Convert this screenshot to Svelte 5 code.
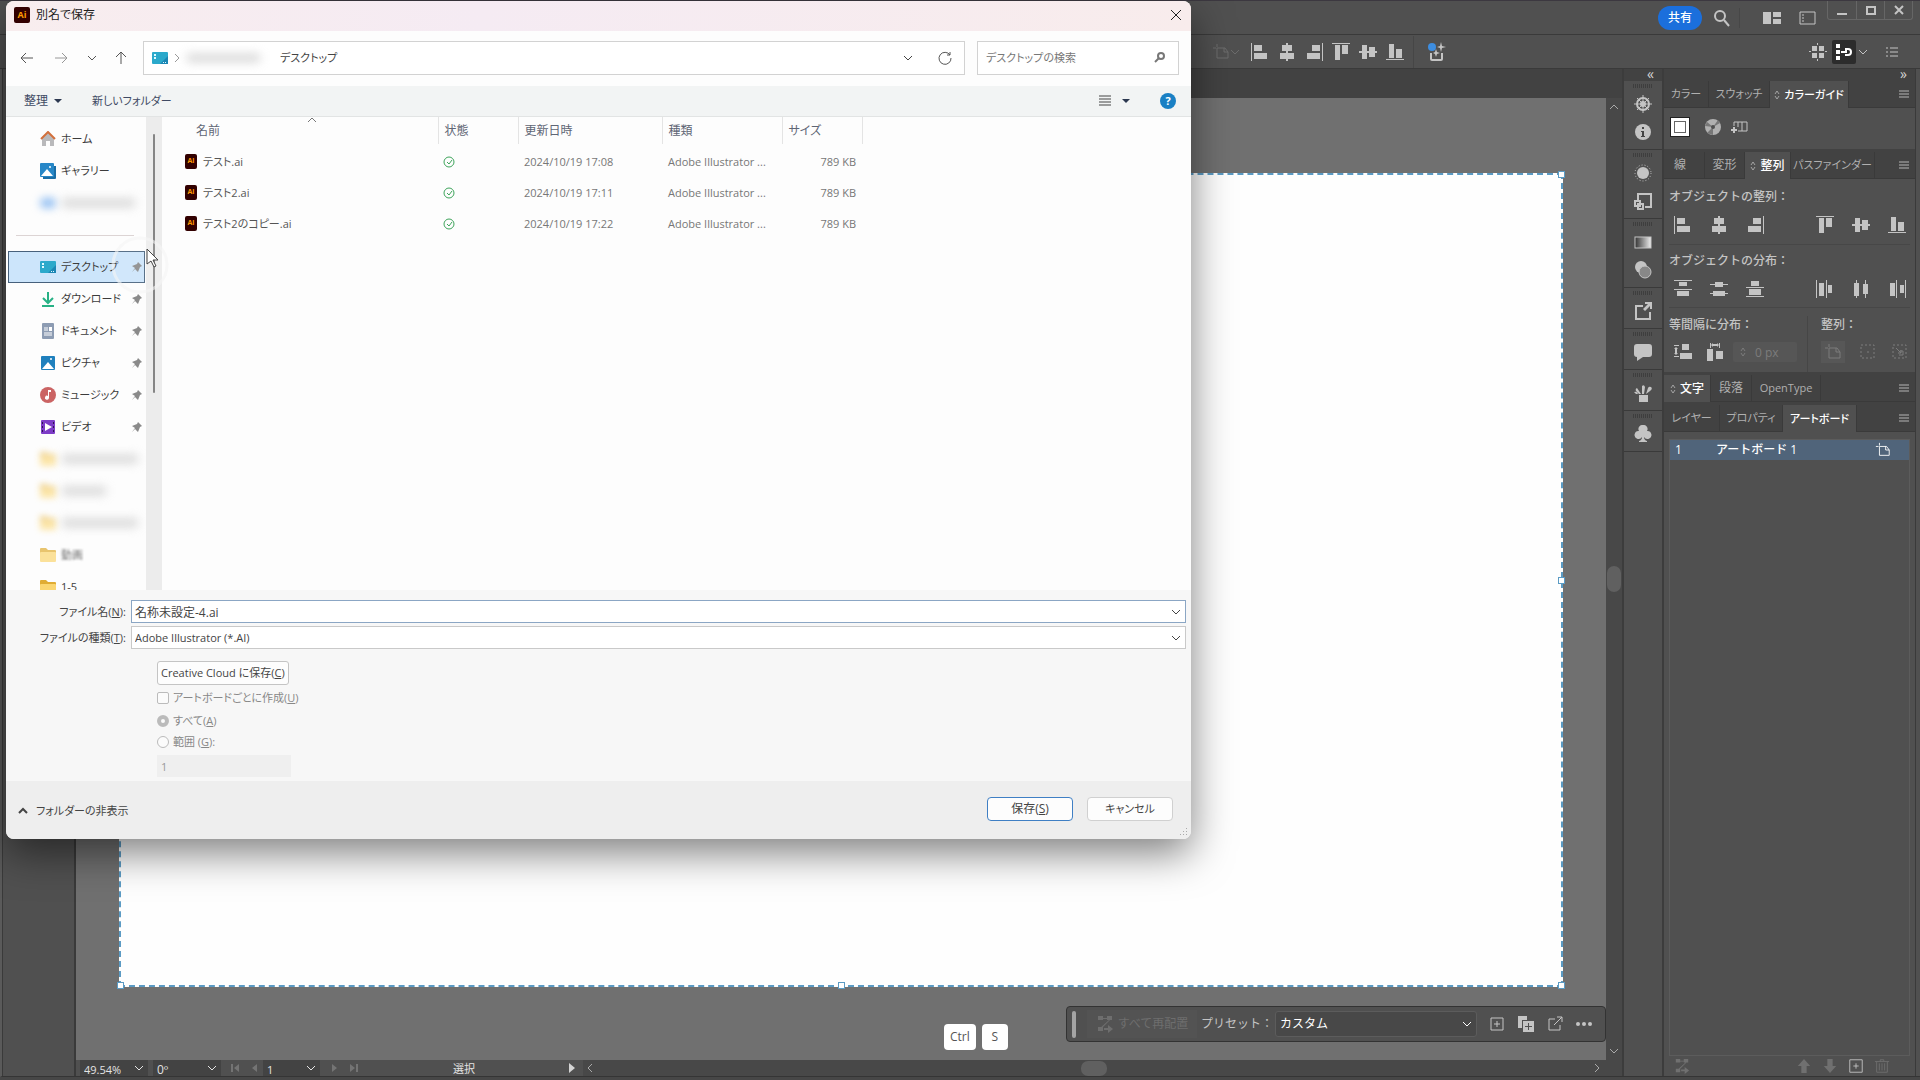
<script lang="ts">
  const files = [
    { name: 'テスト.ai', date: '2024/10/19 17:08' },
    { name: 'テスト2.ai', date: '2024/10/19 17:11' },
    { name: 'テスト2のコピー.ai', date: '2024/10/19 17:22' },
  ];

  const quickAccess = [
    { icon: 'desktop', label: 'デスクトップ', pinned: true, selected: true },
    { icon: 'download', label: 'ダウンロード', pinned: true },
    { icon: 'document', label: 'ドキュメント', pinned: true },
    { icon: 'picture', label: 'ピクチャ', pinned: true },
    { icon: 'music', label: 'ミュージック', pinned: true },
    { icon: 'video', label: 'ビデオ', pinned: true },
    { icon: 'folder', label: '', mask: 78 },
    { icon: 'folder', label: '', mask: 46 },
    { icon: 'folder', label: '', mask: 78 },
    { icon: 'folder', label: '動画', soft: true },
    { icon: 'folder', label: '1-5' },
  ];

  // 18x18 glyphs
  const glyphs: Record<string, string> = {
    left: 'M0 0h1v18H0zM3 2h8v6H3zM3 10h13v6H3z',
    hcenter: 'M8 0h2v18H8zM4 2h10v6H4zM2 10h14v6H2z',
    right: 'M17 0h1v18h-1zM7 2h8v6H7zM2 10h13v6H2z',
    top: 'M0 0h18v1H0zM3 2h5v15H3zM10 2h6v9h-6z',
    vcenter: 'M0 8h18v2H0zM3 2h5v14H3zM10 4h6v10h-6z',
    bottom: 'M0 16h18v1H0zM3 1h5v14H3zM10 6h6v9h-6z',
    dTop: 'M0 0h18v1H0zM5 2h8v4H5zM0 9h18v1H0zM3 11h12v5H3z',
    dMid: 'M0 4h18v1H0zM5 2h8v5H5zM0 13h18v1H0zM3 11h12v5H3z',
    dBottom: 'M5 1h8v5H5zM0 7h18v1H0zM3 9h12v6H3zM0 16h18v1H0z',
    dLeft: 'M0 0h1v18H0zM3 3h5v13H3zM10 0h1v18h-1zM12 5h4v8h-4z',
    dCenter: 'M4 0h1v18H4zM2 3h5v13H2zM13 0h1v18h-1zM11 4h5v10h-5z',
    dRight: 'M2 3h5v13H2zM8 0h1v18H8zM12 5h4v8h-4zM17 0h1v18h-1z',
    spaceV: 'M8 1h7v6H8zM6 10h12v6H6zM0 2h5v1H0zM0 13h5v1H0zM2 4l2 2H3v4h1l-2 2-2-2h1V6H0z',
    spaceH: 'M1 6h6v12H1zM10 8h7v8h-7zM4 0h1v5H4zM13 0h1v5h-1zM5 2l2-2v1h4V0l2 2-2 2V3H7v1z',
    share: 'M1 3h8v2H3v11h12v-6h2v8H1zM11 0h7v7h-2V4l-5 5-2-2 5-5h-3z',
    comment: 'M3 1h12q3 0 3 3v7q0 3-3 3H9l-6 4v-4q-3 0-3-3V4q0-3 3-3z',
    club: 'M9 0a4 4 0 0 1 4 6 4 4 0 1 1-3 6q0 3 3 4v1H5v-1q3-1 3-4a4 4 0 1 1-3-6 4 4 0 0 1 4-6z',
    brushes: 'M5 11h9v7H5zM8 2q2-2 3 1l-1 7H8zM3 4l4 6H5L2 7q-1-2 1-3zM17 3q2 2-1 4l-4 3 2-6q1-2 3-1zM0 8q3-1 4 2H2z',
    grid: 'M3 3h5v5H3zM10 3h5v5h-5zM3 10h5v5H3zM10 10h5v5h-5zM8 0h1v2H8zM8 16h1v2H8zM0 8h2v1H0zM16 8h2v1h-2z',
    rearrange: 'M2 1h5v4H2zM11 1h5v4h-5zM7 3h4v1H7zM13 5h1L5 14H3zM2 12h5v4H2zM8 13h4v-3l5 4-5 4v-3H8z',
    up: 'M9 1l7 8h-4v8H6V9H2z',
    down: 'M9 17l7-8h-4V1H6v8H2z',
  };

  const alignRow = ['left', 'hcenter', 'right', 'top', 'vcenter', 'bottom'];
  const distributeRow = ['dTop', 'dMid', 'dBottom', 'dLeft', 'dCenter', 'dRight'];

  let fileName = $state('名称未設定-4.ai');
</script>

{#snippet glyph(name: string)}
  <svg class="glyph" viewBox="0 0 18 18" aria-hidden="true"><path d={glyphs[name]} /></svg>
{/snippet}

{#snippet chevron()}
  <svg class="chevron" viewBox="0 0 10 10" aria-hidden="true"><path d="M1 3l4 4 4-4" /></svg>
{/snippet}

{#snippet menuButton()}
  <button class="menu" aria-label="menu">
    <svg viewBox="0 0 10 8"><path d="M0 1h10M0 4h10M0 7h10" /></svg>
  </button>
{/snippet}

{#snippet updown()}
  <svg class="updown" viewBox="0 0 6 10" aria-hidden="true"><path d="M1 4l2-3 2 3M1 6l2 3 2-3" /></svg>
{/snippet}

{#snippet artboardIcon()}
  <svg class="glyph line" viewBox="0 0 18 18" aria-hidden="true">
    <path d="M1 5h3M5 1v3M5 5h8l3 4v6H5zM12 5v4h4" />
  </svg>
{/snippet}

{#snippet fileIcon(name: string)}
  <svg class="file-icon" viewBox="0 0 16 16" aria-hidden="true">
    {#if name === 'home'}
      <path d="M2 7l6-6 6 6v8H10v-5H6v5H2z" fill="#b9b9bb" />
      <path d="M1 8l7-7 7 7" fill="none" stroke="#d2703c" stroke-width="2" />
    {:else if name === 'gallery'}
      <path d="M3 3h13v12q0 1-1 1H3z" fill="#1a6da5" />
      <rect width="14" height="14" rx="1" fill="#2787c7" />
      <path d="M1 13l6-7 6 7z" fill="#fff" />
      <circle cx="10" cy="4" r="1" fill="#fff" />
    {:else if name === 'desktop'}
      <rect y="2" width="16" height="12" rx="1" fill="#2ba9cb" />
      <path d="M8 14l8-8v8z" fill="#1b86b4" />
      <path d="M2 4h2v2H2zM2 7h2v2H2zM11 12h1v1h-1zM13 12h1v1h-1z" fill="#dffaff" />
    {:else if name === 'download'}
      <path d="M8 1v10M3 7l5 5 5-5M2 15h12" fill="none" stroke="#27b185" stroke-width="2" />
    {:else if name === 'document'}
      <rect x="2" width="12" height="16" rx="1" fill="#8d9cb3" />
      <path d="M4 5h4M4 7h4M4 10h8M4 12h8" stroke="#fff" />
      <rect x="9" y="4" width="3" height="4" fill="#fff" />
    {:else if name === 'picture'}
      <rect x="1" y="1" width="14" height="14" rx="1" fill="#1f80bd" />
      <path d="M2 14l6-7 6 7z" fill="#fff" />
      <circle cx="11" cy="4" r="1" fill="#fff" />
    {:else if name === 'music'}
      <circle cx="8" cy="8" r="8" fill="#cb6464" />
      <path d="M8 3h3v2H9v6a2 2 0 1 1-1-2z" fill="#fff" />
    {:else if name === 'video'}
      <rect x="1" y="1" width="14" height="14" rx="1" fill="#7d3cc7" />
      <path d="M5 4l7 4-7 4z" fill="#fff" />
      <path d="M2 3h1v2H2zM2 7h1v2H2zM2 11h1v2H2zM13 3h1v2h-1zM13 7h1v2h-1zM13 11h1v2h-1z" fill="#2f1552" />
    {:else}
      <path d="M0 2q0-1 1-1h5l2 2h7q1 0 1 1v4H0z" fill="#e0ac33" />
      <rect y="5" width="16" height="10" rx="1" fill="#fbd671" />
    {/if}
  </svg>
{/snippet}

<div class="app">
  <header class="topbar">
    <button class="share">共有</button>
    <button class="top-icon search-top" aria-label="検索">
      <svg viewBox="0 0 18 18"><circle cx="8" cy="7" r="5" /><path d="M12 11l5 6" /></svg>
    </button>
    <button class="top-icon solid" aria-label="ワークスペース">
      <svg viewBox="0 0 18 12"><path d="M0 0h8v12H0zM10 0h8v5h-8zM10 7h8v5h-8z" /></svg>
    </button>
    <button class="top-icon" aria-label="パネル">
      <svg viewBox="0 0 18 14"><path d="M1 1h15v12H1zM3 4h2M3 7h2M3 10h2" /></svg>
    </button>
    <div class="win-buttons">
      <button aria-label="最小化"><svg viewBox="0 0 12 12"><path d="M1 10h10" /></svg></button>
      <button aria-label="最大化"><svg viewBox="0 0 12 12"><path d="M2 3h8v7H2z" /></svg></button>
      <button aria-label="閉じる"><svg viewBox="0 0 12 12"><path d="M2 2l8 8M10 2l-8 8" /></svg></button>
    </div>
  </header>

  <div class="control">
    <div class="control-group">
      <span class="faded">{@render artboardIcon()}{@render chevron()}</span>
      {#each alignRow as name}
        <button class="bare" aria-label={name}>{@render glyph(name)}</button>
      {/each}
      <span class="rule"></span>
      <button class="bare" aria-label="共有リンク">
        <svg class="recolor" viewBox="0 0 20 20">
          <circle cx="5" cy="5" r="4" fill="#3d8de0" />
          <path d="M4 11v6q0 1 1 1h9q1 0 1-1v-6" fill="none" stroke="#c4c4c4" stroke-width="2" />
          <path d="M14 0l1 4 4 1-4 1-1 4-1-4-3-1 3-1zM9 7l1 3 3 1-3 1-1 3-1-3-2-1 2-1z" fill="#c4c4c4" />
        </svg>
      </button>
    </div>
    <div class="control-end">
      <button class="bare grid-button" aria-label="grid">{@render glyph('grid')}</button>
      <button class="snap" aria-label="snap">
        <svg viewBox="0 0 18 18"><path d="M1 1h4v4H1zM1 7h4v4H1zM1 13h4v4H1zM6 8h4V5h3q4 0 4 4t-4 4h-3v-2h3q2 0 2-2t-2-2h-1v3H6z" /></svg>
      </button>
      {@render chevron()}
      <button class="bare list" aria-label="list">
        <svg viewBox="0 0 12 10"><path d="M0 1h2M4 1h8M0 5h2M4 5h8M0 9h2M4 9h8" /></svg>
      </button>
    </div>
  </div>

  <div class="main">
    <aside class="tools"></aside>

    <section class="doc">
      <div class="doc-tabs"></div>
      <div class="view">
        <div class="canvas">
          <div class="artboard">
            <i class="handle n e"></i><i class="handle mid e"></i><i class="handle s e"></i>
            <i class="handle s w"></i><i class="handle s center"></i>
          </div>
          <div class="keys"><kbd>Ctrl</kbd><kbd>S</kbd></div>
          <div class="taskbar">
            <span class="grip"></span>
            <button class="rearrange" disabled>{@render glyph('rearrange')}すべて再配置</button>
            <label for="preset">プリセット：</label>
            <div class="pick preset">
              <select id="preset"><option>カスタム</option></select>
              {@render chevron()}
            </div>
            <button class="bare" aria-label="追加">
              <svg class="glyph line" viewBox="0 0 18 18"><path d="M3 3h12v12H3zM9 6v6M6 9h6" /></svg>
            </button>
            <button class="bare" aria-label="複製">
              <svg class="glyph" viewBox="0 0 18 18"><path d="M1 1h9v4H5v8H1z" /><path fill-rule="evenodd" d="M6 6h11v11H6zM11 8v3H8v1h3v3h1v-3h3v-1h-3V8z" /></svg>
            </button>
            <button class="bare" aria-label="書き出し">
              <svg class="glyph line" viewBox="0 0 18 18"><path d="M9 4H3v11h11v-5M8 10l8-8M11 2h5v5" /></svg>
            </button>
            <button class="bare" aria-label="その他">
              <svg class="glyph" viewBox="0 0 18 18"><circle cx="3" cy="9" r="2" /><circle cx="9" cy="9" r="2" /><circle cx="15" cy="9" r="2" /></svg>
            </button>
          </div>
        </div>
        <div class="vscroll">
          <span class="flip">{@render chevron()}</span>
          <span class="thumb"></span>
          {@render chevron()}
        </div>
      </div>
      <footer class="status">
        <div class="pick zoom"><select aria-label="ズーム"><option>49.54%</option></select>{@render chevron()}</div>
        <div class="pick angle"><select aria-label="回転"><option>0º</option></select>{@render chevron()}</div>
        <div class="steps"><svg viewBox="0 0 30 10"><path d="M1 1h2v8H1zM9 1v8L4 5zM27 1v8l-5-4z" /></svg></div>
        <div class="pick page"><select aria-label="アートボード"><option>1</option></select>{@render chevron()}</div>
        <div class="steps"><svg viewBox="0 0 30 10"><path d="M3 1v8l5-4zM21 1v8l5-4zM27 1h2v8h-2z" /></svg></div>
        <div class="tool-name">選択</div>
        <svg class="play" viewBox="0 0 6 10"><path d="M0 0v10l6-5z" /></svg>
        <div class="hscroll">
          <span class="turn-left">{@render chevron()}</span>
          <span class="thumb"></span>
          <span class="turn-right">{@render chevron()}</span>
        </div>
      </footer>
    </section>

    <nav class="dock">
      <div class="dock-top">«</div>
      <div class="dock-group">
        <svg class="ring" viewBox="0 0 18 18"><circle cx="9" cy="9" r="6" /><circle cx="9" cy="9" r="2" /><path class="thin" d="M9 0v18M0 9h18M3 3l12 12M15 3L3 15" /></svg>
        <svg viewBox="0 0 18 18"><circle cx="9" cy="9" r="8" /><path d="M8 4h2v2H8zM7 8h3v5h1v1H7v-1h1V9H7z" fill="#444" /></svg>
      </div>
      <div class="dock-group">
        <svg viewBox="0 0 18 18"><circle cx="9" cy="9" r="6" /><circle cx="9" cy="9" r="8" fill="none" stroke="#c4c4c4" stroke-dasharray="1 2" /></svg>
        <svg class="ring" viewBox="0 0 18 18"><path d="M4 8V2h13v13h-6M1 9h5v5H1zM4 12h5v5H4z" /></svg>
      </div>
      <div class="dock-group">
        <svg viewBox="0 0 18 18">
          <defs><linearGradient id="ramp"><stop offset="0" stop-color="#333" /><stop offset="1" stop-color="#eee" /></linearGradient></defs>
          <rect x="1" y="4" width="16" height="11" fill="url(#ramp)" stroke="#c4c4c4" />
        </svg>
        <svg viewBox="0 0 18 18"><circle cx="7" cy="6" r="6" /><circle cx="11" cy="11" r="6" fill="#888" stroke="#c4c4c4" /></svg>
      </div>
      <div class="dock-group">{@render glyph('share')}</div>
      <div class="dock-group">{@render glyph('comment')}</div>
      <div class="dock-group">{@render glyph('brushes')}</div>
      <div class="dock-group">{@render glyph('club')}</div>
    </nav>

    <aside class="panels">
      <div class="panels-top">»</div>

      <section class="panel">
        <div class="tabs">
          <button class="t-color">カラー</button>
          <button class="t-swatch">スウォッチ</button>
          <button class="t-guide active">{@render updown()}カラーガイド</button>
          {@render menuButton()}
        </div>
        <div class="guide-body">
          <span class="swatch"></span>
          <svg class="wheel" viewBox="0 0 18 18"><circle cx="9" cy="9" r="8" fill="#b0b0b0" /><path d="M9 9L1 8 3 4zM9 9l-6 6 6 2zM9 9l7-4-2-3z" fill="#777" /><circle cx="9" cy="9" r="2" fill="#505050" /></svg>
          <svg class="wheel" viewBox="0 0 18 18"><path d="M4 8V4h13v9H8M8 4v5M12 4v9" fill="none" stroke="#c4c4c4" /><path d="M3 9h2v2h2v2H5v2H3v-2H1v-2h2z" fill="#c4c4c4" /></svg>
        </div>
      </section>

      <section class="panel">
        <div class="tabs">
          <button class="t-stroke">線</button>
          <button class="t-transform">変形</button>
          <button class="t-align active">{@render updown()}整列</button>
          <button class="t-path">パスファインダー</button>
          {@render menuButton()}
        </div>
        <div class="align-body">
          <h3>オブジェクトの整列：</h3>
          <div class="icon-row">
            {#each alignRow as name}
              <button class="bare" aria-label={name}>{@render glyph(name)}</button>
            {/each}
          </div>
          <h3 class="ruled">オブジェクトの分布：</h3>
          <div class="icon-row">
            {#each distributeRow as name}
              <button class="bare" aria-label={name}>{@render glyph(name)}</button>
            {/each}
          </div>
          <div class="spacing">
            <div class="spacing-left">
              <h3>等間隔に分布：</h3>
              <div class="spacing-row">
                <button class="bare" aria-label="垂直方向">{@render glyph('spaceV')}</button>
                <button class="bare" aria-label="水平方向">{@render glyph('spaceH')}</button>
                <div class="stepper">
                  {@render updown()}
                  <input aria-label="間隔" value="0 px" disabled />
                </div>
              </div>
            </div>
            <div class="spacing-right">
              <h3>整列：</h3>
              <div class="spacing-row dim">
                <span class="chosen">{@render artboardIcon()}</span>
                <svg class="glyph line" viewBox="0 0 18 18"><rect x="2" y="2" width="13" height="13" stroke-dasharray="2 2" /><path d="M8 9h2" /></svg>
                <svg class="glyph line" viewBox="0 0 18 18"><rect x="2" y="2" width="13" height="13" stroke-dasharray="2 2" /><path d="M5 5l5 5M10 7v3H7M9 8h3v4H8" /></svg>
              </div>
            </div>
          </div>
        </div>
      </section>

      <section class="panel">
        <div class="tabs">
          <button class="t-char active">{@render updown()}文字</button>
          <button class="t-para">段落</button>
          <button class="t-open">OpenType</button>
          {@render menuButton()}
        </div>
      </section>

      <section class="panel grow">
        <div class="tabs">
          <button class="t-layer">レイヤー</button>
          <button class="t-prop">プロパティ</button>
          <button class="t-board active">アートボード</button>
          {@render menuButton()}
        </div>
        <div class="board-list">
          <div class="board-row"><span>1</span><span class="board-name">アートボード 1</span>{@render artboardIcon()}</div>
        </div>
        <div class="board-foot">
          <span class="off first">{@render glyph('rearrange')}</span>
          <span class="off">{@render glyph('up')}</span>
          <span class="off">{@render glyph('down')}</span>
          <button class="bare" aria-label="新規アートボード">
            <svg class="glyph line" viewBox="0 0 18 18"><path d="M2 2h14v14H2zM9 6v6M6 9h6" /></svg>
          </button>
          <span class="off">
            <svg class="glyph line" viewBox="0 0 18 18"><path d="M1 4h16M7 4V2h4v2M3 4v12h12V4M6 6v8M9 6v8M12 6v8" /></svg>
          </span>
        </div>
      </section>
    </aside>
  </div>

  <div class="dialog" role="dialog" aria-label="別名で保存">
    <header class="title">
      <span class="ai-badge">Ai</span>
      <span>別名で保存</span>
      <button class="close" aria-label="閉じる"><svg viewBox="0 0 12 12"><path d="M1 1l10 10M11 1L1 11" /></svg></button>
    </header>

    <div class="nav">
      <button aria-label="戻る"><svg viewBox="0 0 14 14"><path d="M13 7H1M6 2L1 7l5 5" /></svg></button>
      <button class="pale" aria-label="進む"><svg viewBox="0 0 14 14"><path d="M1 7h12M8 2l5 5-5 5" /></svg></button>
      <button class="narrow" aria-label="履歴">{@render chevron()}</button>
      <button aria-label="上へ"><svg viewBox="0 0 14 14"><path d="M7 13V1M2 6l5-5 5 5" /></svg></button>
      <div class="address">
        {@render fileIcon('desktop')}
        <span class="turn-right crumb-arrow">{@render chevron()}</span>
        <span class="masked crumb"></span>
        <span class="path">デスクトップ</span>
        {@render chevron()}
        <button class="refresh" aria-label="更新"><svg viewBox="0 0 14 14"><path d="M12 4a6 6 0 1 0 1 3M12 1v3H9" /></svg></button>
      </div>
      <div class="search">
        <input type="text" aria-label="検索" placeholder="デスクトップの検索" />
        <svg viewBox="0 0 14 14"><circle cx="8" cy="5" r="3" /><path d="M6 7l-4 4" /></svg>
      </div>
    </div>

    <div class="commands">
      <button class="organize">整理<i class="caret"></i></button>
      <button>新しいフォルダー</button>
      <button class="view-mode" aria-label="表示">
        <svg viewBox="0 0 12 12"><path d="M0 1h12M0 4h12M0 7h12M0 10h12" /></svg><i class="caret"></i>
      </button>
      <button class="help" aria-label="ヘルプ">?</button>
    </div>

    <div class="browser">
      <nav class="side">
        <a href="#home">{@render fileIcon('home')}<span>ホーム</span></a>
        <a href="#gallery">{@render fileIcon('gallery')}<span>ギャラリー</span></a>
        <div class="side-masked"><i class="cloud"></i><i class="masked"></i></div>
        <hr />
        {#each quickAccess as item}
          <a href="#{item.icon}" class:selected={item.selected} class:soft={item.soft} class:hidden-name={item.mask}>
            {@render fileIcon(item.icon)}
            {#if item.mask}
              <i class="masked" style="width: {item.mask}px"></i>
            {/if}
            <span>{item.label}</span>
            {#if item.pinned}
              <svg class="pin" viewBox="0 0 12 12"><path d="M7 1l4 4-2 1-2 5-3-3-3 3 3-4-3-2 5-2z" /></svg>
            {/if}
          </a>
        {/each}
      </nav>
      <div class="side-scroll"><span></span></div>
      <div class="files">
        <table>
          <thead>
            <tr>
              <th class="c-name">名前<svg class="sort" viewBox="0 0 10 6"><path d="M1 5l4-4 4 4" /></svg></th>
              <th class="c-state">状態</th>
              <th class="c-date">更新日時</th>
              <th class="c-type">種類</th>
              <th class="c-size">サイズ</th>
            </tr>
          </thead>
          <tbody>
            {#each files as file}
              <tr>
                <td class="file-name"><div><span class="ai-file">Ai</span>{file.name}</div></td>
                <td><svg class="ok" viewBox="0 0 12 12"><circle cx="6" cy="6" r="5" /><path d="M4 6l2 2 3-4" /></svg></td>
                <td>{file.date}</td>
                <td>Adobe Illustrator ...</td>
                <td class="size">789 KB</td>
              </tr>
            {/each}
          </tbody>
        </table>
      </div>
    </div>

    <div class="form">
      <div class="row">
        <label for="file-name">ファイル名(<u>N</u>):</label>
        <div class="pick focus"><input id="file-name" type="text" bind:value={fileName} />{@render chevron()}</div>
      </div>
      <div class="row">
        <label for="file-type">ファイルの種類(<u>T</u>):</label>
        <div class="pick"><select id="file-type"><option>Adobe Illustrator (*.AI)</option></select>{@render chevron()}</div>
      </div>
      <div class="options">
        <button class="cloud-save">Creative Cloud に保存(<u>C</u>)</button>
        <label class="check"><input type="checkbox" disabled /><span>アートボードごとに作成(<u>U</u>)</span></label>
        <label><input type="radio" name="range" checked disabled /><span>すべて(<u>A</u>)</span></label>
        <label><input type="radio" name="range" disabled /><span>範囲 (<u>G</u>):</span></label>
        <input class="range" type="text" aria-label="範囲" value="1" disabled />
      </div>
    </div>

    <footer class="foot">
      <button class="fold"><span class="flip">{@render chevron()}</span>フォルダーの非表示</button>
      <button class="btn primary">保存(<u>S</u>)</button>
      <button class="btn">キャンセル</button>
      <svg class="corner" viewBox="0 0 8 8"><path d="M6 0h1v1H6zM3 3h1v1H3zM6 3h1v1H6zM0 6h1v1H0zM3 6h1v1H3zM6 6h1v1H6z" /></svg>
    </footer>
  </div>

  <svg class="pointer" viewBox="0 0 60 60" aria-hidden="true">
    <circle cx="29" cy="30" r="27" />
    <path d="M36 14v15l4-3 3 6 2-1-3-6h5z" />
  </svg>
</div>

<style>
  :global(body) {
    margin: 0;
    overflow: hidden;
  }

  .app {
    position: relative;
    display: flex;
    flex-direction: column;
    height: 100vh;
    box-sizing: border-box;
    border-bottom: 3px solid #474747;
    background: #505050;
    color: #c4c4c4;
    font-family: 'Open Sans', 'Noto Sans CJK JP', sans-serif;
    font-size: 12px;
    line-height: 16px;
    font-feature-settings: 'palt';
    overflow: hidden;
  }

  .app * {
    box-sizing: border-box;
  }

  button,
  input,
  select {
    font: inherit;
    font-feature-settings: inherit;
    color: inherit;
    margin: 0;
    padding: 0;
    border: 0;
    background: none;
    appearance: none;
    outline: none;
  }

  button {
    display: flex;
    align-items: center;
    justify-content: center;
    white-space: nowrap;
  }

  svg {
    display: block;
    flex-shrink: 0;
  }

  .glyph {
    width: 18px;
    height: 18px;
    fill: currentColor;
  }

  .glyph.line {
    fill: none;
    stroke: currentColor;
  }

  .chevron {
    width: 10px;
    height: 10px;
    fill: none;
    stroke: currentColor;
  }

  .updown {
    width: 6px;
    height: 10px;
    fill: none;
    stroke: currentColor;
  }

  .flip { transform: rotate(180deg); }
  .turn-left { transform: rotate(90deg); }
  .turn-right { transform: rotate(-90deg); }

  /* top bars */
  .topbar {
    display: flex;
    align-items: center;
    justify-content: flex-end;
    height: 35px;
    padding-right: 7px;
    border-top: 1px solid #3c3840;
    border-bottom: 1px solid #3a3a3a;
  }

  .share {
    width: 44px;
    height: 24px;
    border-radius: 12px;
    background: #1b6fdc;
    color: #fff;
    font-weight: 500;
  }

  .top-icon {
    width: 36px;
    height: 20px;
    fill: none;
    stroke: #c4c4c4;
  }

  .top-icon svg { width: 18px; }
  .search-top { width: 38px; margin-right: 14px; border-right: 1px solid #474747; stroke-width: 2; }
  .solid { fill: #c4c4c4; stroke: none; }

  .win-buttons {
    display: flex;
    align-self: flex-start;
    margin-left: 1px;
    border: 1px solid #666;
    border-top: 0;
    border-radius: 0 0 3px 3px;
  }

  .win-buttons button { width: 28px; height: 18px; }
  .win-buttons button + button { border-left: 1px solid #666; }
  .win-buttons svg { width: 12px; fill: none; stroke: #c4c4c4; stroke-width: 2; }

  .control {
    display: flex;
    align-items: center;
    justify-content: space-between;
    height: 34px;
    padding: 0 22px 0 1212px;
    border-bottom: 1px solid #3a3a3a;
  }

  .control-group,
  .control-end {
    display: flex;
    align-items: center;
    gap: 9px;
  }

  .faded { display: flex; align-items: center; margin-right: 2px; color: #6c6c6c; }
  .rule { width: 1px; height: 32px; background: #464646; }
  .recolor { width: 20px; margin-left: 4px; }
  .control-end { gap: 2px; }
  .grid-button { margin-right: 3px; }
  .snap { width: 24px; height: 24px; background: #2c2c2c; border-radius: 2px; fill: #fff; }
  .snap svg { width: 18px; }
  .list { margin-left: 16px; stroke: #c4c4c4; }
  .list svg { width: 12px; }

  .main {
    flex: 1;
    display: flex;
    min-height: 0;
    padding-right: 4px;
    border-left: 2px solid #5a5a5a;
    border-bottom: 1px solid #353535;
  }

  .tools {
    width: 74px;
    border: 1px solid #3a3a3a;
    border-width: 0 2px 0 1px;
  }

  /* document window */
  .doc { flex: 1; display: flex; flex-direction: column; min-width: 0; }
  .doc-tabs { height: 29px; background: #424242; }
  .view { flex: 1; display: flex; min-height: 0; }

  .canvas {
    position: relative;
    flex: 1;
    display: flex;
    padding: 75px 43px 73px;
    background: #707070;
  }

  .artboard {
    position: relative;
    flex: 1;
    border: 2px dashed #5b9bc4;
    background: #fefefe;
  }

  .handle {
    position: absolute;
    width: 7px;
    height: 7px;
    border: 1px solid #5b9bc4;
    background: #fff;
  }

  .handle.n { top: -4px; }
  .handle.s { bottom: -4px; }
  .handle.e { right: -4px; }
  .handle.w { left: -4px; }
  .handle.mid { top: calc(50% - 3px); }
  .handle.center { left: calc(50% - 3px); }

  .keys {
    position: absolute;
    left: 868px;
    bottom: 10px;
    display: flex;
    gap: 6px;
  }

  kbd {
    min-width: 26px;
    height: 26px;
    padding: 0 6px;
    border-radius: 4px;
    background: #fff;
    color: #555;
    font: 12px/26px 'Open Sans', sans-serif;
    text-align: center;
  }

  .taskbar {
    position: absolute;
    right: 0;
    bottom: 18px;
    display: flex;
    align-items: center;
    height: 36px;
    padding: 0 12px 0 5px;
    border: 1px solid #333;
    border-radius: 4px;
    background: #505050;
    gap: 11px;
  }

  .grip { width: 4px; height: 27px; border-radius: 2px; background: #a4a4a4; }
  .rearrange { gap: 4px; width: 110px; height: 28px; background: #535353; color: #6e6e6e; font-feature-settings: normal; }
  .taskbar label { margin: 0 -9px 0 -7px; font-feature-settings: normal; white-space: nowrap; }

  .pick { position: relative; display: flex; align-items: center; }
  .pick select,
  .pick input { width: 100%; height: 100%; padding: 0 4px; }
  .pick > .chevron { position: absolute; right: 4px; pointer-events: none; }

  .preset { width: 202px; height: 26px; border: 1px solid #5c5c5c; border-radius: 3px; background: #484848; color: #fff; font-feature-settings: normal; }
  .taskbar .glyph { width: 18px; }

  .vscroll {
    display: flex;
    flex-direction: column;
    align-items: center;
    justify-content: space-between;
    width: 16px;
    padding: 4px 0;
    background: #484848;
    color: #aaa;
  }

  .vscroll .thumb { width: 14px; height: 26px; border-radius: 7px; background: #606060; }

  .status {
    display: flex;
    align-items: center;
    height: 16px;
    padding-left: 4px;
    font-size: 11px;
    background: #505050;
    color: #e4e4e4;
  }

  .status .pick { height: 16px; background: #434343; margin-right: 5px; }
  .status select { padding-top: 2px; }
  .zoom { width: 68px; }
  .angle { width: 68px; font-size: 12px; }
  .status .page { width: 57px; }
  .steps { width: 37px; fill: #747474; }
  .steps svg { width: 30px; margin-left: 4px; }
  .tool-name { width: 200px; padding-top: 2px; text-align: center; margin-left: 2px; }
  .play { width: 6px; margin: 0 8px 0 5px; fill: #d4d4d4; }

  .hscroll {
    flex: 1;
    display: flex;
    align-items: center;
    justify-content: space-between;
    height: 16px;
    padding: 0 20px 0 2px;
    background: #484848;
    color: #aaa;
  }

  .hscroll .thumb { width: 26px; height: 15px; border-radius: 7px; background: #606060; }

  /* icon dock */
  .dock {
    width: 42px;
    border: 2px solid #3c3c3c;
    border-width: 0 2px;
  }

  .dock-top,
  .panels-top {
    height: 12px;
    padding-right: 8px;
    background: #424242;
    color: #d4d4d4;
    font-size: 14px;
    line-height: 9px;
    text-align: right;
  }

  .dock-group {
    display: flex;
    flex-direction: column;
    align-items: center;
    gap: 10px;
    padding: 14px 0 8px;
    border-bottom: 1px solid #3a3a3a;
    background:
      repeating-linear-gradient(90deg, #3e3e3e 0 1px, transparent 1px 2px) center 3px / 20px 4px no-repeat,
      #505050;
    color: #c4c4c4;
    fill: #c4c4c4;
  }

  .dock-group svg { width: 18px; height: 18px; }
  .ring { fill: none; stroke: #c4c4c4; stroke-width: 2; }
  .thin { stroke-width: 1; }

  /* panels */
  .panels { display: flex; flex-direction: column; width: 252px; border-right: 1px solid #3a3a3a; background: #505050; }
  .panel { border-bottom: 3px solid #424242; }
  .panel.grow { flex: 1; display: flex; flex-direction: column; border-bottom: 0; }

  .tabs { display: flex; height: 27px; background: #424242; border-bottom: 1px solid #3a3a3a; font-size: 11px; }
  .tabs > button { gap: 4px; border-right: 1px solid #3a3a3a; color: #b0b0b0; }
  .tabs > button.active { height: 27px; background: #505050; color: #fff; font-weight: 500; }
  .tabs .updown { stroke: #a4a4a4; }
  .tabs .menu { margin-left: auto; width: 22px; border: 0; stroke: #b4b4b4; }
  .menu svg { width: 10px; height: 8px; }

  .t-color { width: 45px; }
  .t-swatch { width: 61px; }
  .t-guide { width: 79px; }
  .tabs .t-stroke { width: 41px; padding-right: 8px; font-size: 12px; }
  .t-transform { width: 40px; font-size: 12px; }
  .t-align { width: 46px; font-size: 12px; }
  .t-path { width: 84px; }
  .t-char { width: 47px; font-size: 12px; }
  .t-para { width: 41px; font-size: 12px; }
  .t-open { width: 69px; }
  .t-layer { width: 56px; }
  .t-prop { width: 63px; }
  .t-board { width: 74px; }

  .guide-body { display: flex; align-items: center; gap: 8px; height: 41px; padding: 0 0 3px 6px; }
  .swatch { width: 20px; height: 20px; margin-right: 6px; border: 1px solid #222; outline: 1px solid #666; outline-offset: -5px; background: #fff; }
  .wheel { width: 18px; }

  .align-body { padding: 9px 5px 0; }
  h3 { margin: 0; font-size: 12px; font-weight: 500; line-height: 18px; font-feature-settings: normal; }
  h3.ruled { margin-top: 10px; padding-top: 7px; border-top: 1px solid #474747; }
  .icon-row { display: grid; grid-template-columns: 36px 36px 70px 36px 36px 18px; margin-top: 10px; padding-left: 5px; }
  .icon-row .bare { width: 18px; }
  .spacing { display: flex; margin-top: 9px; border-top: 1px solid #474747; }
  .spacing-left { width: 139px; margin-top: 8px; border-right: 1px solid #464646; }
  .spacing-right { padding: 8px 0 0 13px; }
  .spacing-row { display: flex; align-items: center; gap: 14px; height: 28px; margin-bottom: 10px; padding: 8px 0 0 5px; }
  .spacing-right .spacing-row { padding-left: 0; }
  .stepper { display: flex; align-items: center; width: 64px; height: 20px; padding-left: 7px; gap: 9px; margin-left: -5px; border-radius: 2px; background: #565656; color: #7c7c7c; }
  .stepper input { width: 36px; height: 20px; }
  .dim { color: #7c7c7c; }
  .chosen { padding: 2px 3px; background: #575757; }

  .board-list { flex: 1; margin: 7px 5px 0; border: 1px solid #5c5c5c; }
  .board-row { display: flex; align-items: center; height: 20px; padding: 0 18px 0 5px; background: #50647a; color: #fff; font-weight: 500; font-feature-settings: normal; }
  .board-name { flex: 1; margin-left: 34px; }
  .board-row .glyph { width: 16px; height: 16px; }
  .board-foot { display: flex; align-items: center; gap: 10px; height: 20px; padding: 0 25px 0 10px; }
  .board-foot .glyph { width: 16px; height: 16px; }
  .off { color: #707070; }
  .off.first { margin-right: auto; }

  /* save dialog */
  .dialog {
    position: absolute;
    top: 1px;
    left: 6px;
    width: 1185px;
    max-width: 100%;
    border-radius: 8px;
    background: #fdfdfd;
    box-shadow: 0 14px 40px rgba(0, 0, 0, 0.5);
    color: #444;
    font-size: 11px;
    overflow: hidden;
  }

  .title {
    display: flex;
    align-items: center;
    gap: 6px;
    height: 30px;
    padding: 0 9px 2px 8px;
    background: linear-gradient(90deg, #f8edee, #f5ebf3 40%, #f8ecec);
    color: #222;
    font-size: 12px;
  }

  .ai-badge,
  .ai-file {
    border-radius: 2px;
    background: #320000;
    color: #ff9a00;
    font-weight: 700;
    text-align: center;
  }

  .ai-badge { width: 16px; height: 16px; font-size: 9px; line-height: 16px; }
  .close { margin-left: auto; stroke: #222; }
  .close svg { width: 12px; }

  .nav { display: flex; align-items: center; height: 55px; padding: 0 12px 2px 4px; }
  .nav > button { width: 34px; fill: none; stroke: #555; }
  .nav > button svg { width: 14px; }
  .nav .narrow { width: 28px; }
  .nav > .narrow svg { width: 10px; stroke: #555; }
  .nav > .narrow + button { width: 30px; }
  .pale { opacity: 0.6; }

  .address,
  .search { display: flex; align-items: center; height: 34px; border: 1px solid #d2d2d2; background: #fff; }
  .address { flex: 1; margin: 0 12px 0 7px; padding: 0 12px 0 8px; gap: 4px; }
  .crumb-arrow { color: #999; }
  .search { width: 202px; padding: 0 11px 0 8px; color: #777; }
  .search input { flex: 1; min-width: 0; }
  .search input::placeholder { color: #777; opacity: 1; }
  .search svg { width: 14px; fill: none; stroke: #777; stroke-width: 2; }
  .path { flex: 1; margin-left: 15px; }
  .masked { width: 75px; height: 10px; border-radius: 5px; background: #cfcfcf; filter: blur(5px); opacity: 0.7; }
  .refresh { margin-left: 21px; fill: none; stroke: #555; }
  .refresh svg { width: 14px; }
  .file-icon { width: 16px; height: 16px; }

  .commands { display: flex; align-items: center; height: 31px; padding: 0 15px 0 18px; border-bottom: 1px solid #e2e4e4; background: #f2f4f4; color: #3f4a63; }
  .organize { margin-right: 30px; font-size: 12px; }
  .caret { margin-left: 6px; border: 4px solid transparent; border-top-color: #2c3850; border-bottom: 0; }
  .view-mode { margin-left: auto; gap: 5px; stroke: #444; }
  .view-mode svg { width: 12px; height: 12px; }
  .help { width: 16px; height: 16px; margin-left: 30px; border-radius: 50%; background: #1a80c4; color: #fff; font-weight: 700; }

  .browser { display: flex; height: 473px; }
  .side { width: 140px; padding-top: 6px; overflow: hidden; }
  .side a,
  .side-masked { display: flex; align-items: center; gap: 5px; width: 137px; height: 32px; margin-left: 2px; padding: 0 1px 0 31px; border: 1px solid transparent; color: #3c3c3c; text-decoration: none; white-space: nowrap; }
  .side a span { flex: 1; min-width: 0; overflow: hidden; }
  .side a.selected { border-color: #47617c; background: #cce5fb; }
  .hidden-name .file-icon { filter: blur(3px); opacity: 0.6; }
  .hidden-name .masked { flex-shrink: 0; }
  .soft .file-icon { opacity: 0.7; }
  .soft span { filter: blur(1px); opacity: 0.7; }
  .cloud { width: 16px; height: 10px; border-radius: 5px; background: #8fbdf2; filter: blur(4px); }
  .pin { width: 12px; fill: #8a8a8a; }
  hr { height: 1px; margin: 16px 12px 15px 10px; border: 0; background: #dcd4d4; }

  .side-scroll { display: flex; justify-content: center; width: 16px; padding-top: 17px; background: #ececec; }
  .side-scroll span { width: 2px; height: 259px; border-radius: 1px; background: #858585; }

  .files { flex: 1; margin-left: 2px; }
  table { width: 698px; border-collapse: collapse; table-layout: fixed; color: #777; }
  th { position: relative; height: 27px; padding: 1px 6px 0; border-right: 1px solid #e4e4e4; color: #5f6675; font-size: 12px; font-weight: 400; text-align: left; }
  th.c-name { width: 274px; padding-left: 32px; }
  .c-state { width: 80px; }
  .c-date { width: 144px; }
  .c-type { width: 120px; }
  .c-size { width: 80px; }
  .sort { position: absolute; top: 0; left: 143px; width: 10px; fill: none; stroke: #777; }
  td { height: 31px; padding: 4px 6px 0; }
  td.file-name { padding-left: 21px; color: #555; }
  .file-name div { display: flex; align-items: center; gap: 6px; }
  .ai-file { width: 12px; height: 15px; font-size: 7px; line-height: 14px; }
  .size { text-align: right; }
  .ok { width: 12px; margin-left: -1px; fill: none; stroke: #3da35a; }

  .form { padding: 10px 5px 4px 6px; background: #f7f7f7; }
  .row { display: flex; align-items: center; gap: 5px; margin-bottom: 3px; }
  .row label { width: 114px; text-align: right; white-space: nowrap; }
  .row .pick { flex: 1; height: 23px; border: 1px solid #c9c9c9; background: #fff; }
  .row .pick.focus { border-color: #8ba6c4; font-size: 12px; }
  .row .pick input,
  .row .pick select { padding: 0 3px; }
  .options { display: flex; flex-direction: column; align-items: flex-start; padding: 9px 0 0 145px; color: #888; }
  .options label { display: flex; align-items: center; gap: 4px; height: 21px; }
  .options label.check { height: 25px; }
  .options input[type='checkbox'],
  .options input[type='radio'] { width: 12px; height: 12px; border: 1px solid #bbb; border-radius: 2px; background: #fbfbfb; }
  .options input[type='radio'] { border-radius: 50%; }
  .options input[type='radio']:checked { border: 4px solid #bbb; }
  .cloud-save { height: 24px; padding: 0 3px; border: 1px solid #c4c4c4; border-radius: 3px; background: #fdfdfd; color: #444; }
  .options .range { width: 134px; height: 22px; margin-top: 3px; padding: 0 4px; background: #efefef; color: #999; }

  .foot { position: relative; display: flex; align-items: center; gap: 14px; height: 58px; padding: 0 18px 0 12px; background: #eee; }
  .fold { gap: 8px; margin-right: auto; padding-top: 2px; }
  .fold .chevron { stroke-width: 2; }
  .btn { width: 86px; height: 24px; margin-bottom: 3px; border: 1px solid #d0d0d0; border-radius: 4px; background: #fdfdfd; }
  .btn.primary { border-color: #3f7fc4; font-size: 12px; }
  .corner { position: absolute; right: 3px; bottom: 3px; width: 8px; fill: #aaa; }

  .pointer { position: absolute; top: 235px; left: 111px; width: 60px; }
  .pointer circle { fill: rgba(255, 255, 255, 0.1); stroke: rgba(245, 245, 245, 0.6); stroke-width: 3; }
  .pointer path { fill: #fff; stroke: #444; }
</style>
